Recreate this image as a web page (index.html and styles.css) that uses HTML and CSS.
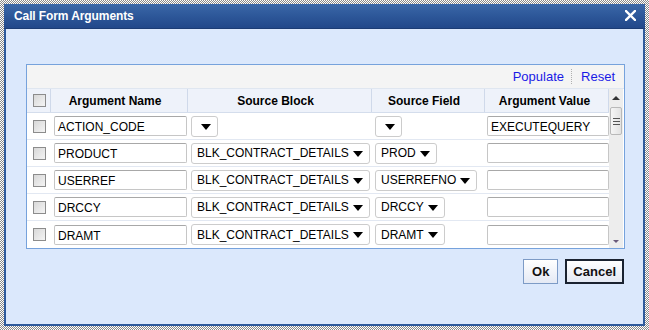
FILE: index.html
```html
<!DOCTYPE html>
<html>
<head>
<meta charset="utf-8">
<link rel="stylesheet" href="styles.css">
</head>
<body>
<div class="dialog">
  <div class="titlebar">
    <span class="title">Call Form Arguments</span>
    <svg class="close" width="11" height="11" viewBox="0 0 11 11"><path d="M1 1L10 10M10 1L1 10" stroke="#fff" stroke-width="2.4" stroke-linecap="square"/></svg>
  </div>
  <div class="content">
    <div class="grid">
      <div class="toolbar">
        <a class="link">Populate</a>
        <span class="sep"></span>
        <a class="link">Reset</a>
      </div>
      <div class="tablewrap">
        <div class="table">
          <div class="row head">
            <div class="cell cb"><span class="check"></span></div>
            <div class="cell">Argument Name</div>
            <div class="cell">Source Block</div>
            <div class="cell">Source Field</div>
            <div class="cell last">Argument Value</div>
          </div>
          <div class="row">
            <div class="cell cb"><span class="check"></span></div>
            <div class="cell"><span class="input name">ACTION_CODE</span></div>
            <div class="cell"><span class="select"><span class="arrow"></span></span></div>
            <div class="cell"><span class="select"><span class="arrow"></span></span></div>
            <div class="cell"><span class="input value">EXECUTEQUERY</span></div>
          </div>
          <div class="row">
            <div class="cell cb"><span class="check"></span></div>
            <div class="cell"><span class="input name">PRODUCT</span></div>
            <div class="cell"><span class="select">BLK_CONTRACT_DETAILS<span class="arrow"></span></span></div>
            <div class="cell"><span class="select">PROD<span class="arrow"></span></span></div>
            <div class="cell"><span class="input value"></span></div>
          </div>
          <div class="row">
            <div class="cell cb"><span class="check"></span></div>
            <div class="cell"><span class="input name">USERREF</span></div>
            <div class="cell"><span class="select">BLK_CONTRACT_DETAILS<span class="arrow"></span></span></div>
            <div class="cell"><span class="select">USERREFNO<span class="arrow"></span></span></div>
            <div class="cell"><span class="input value"></span></div>
          </div>
          <div class="row">
            <div class="cell cb"><span class="check"></span></div>
            <div class="cell"><span class="input name">DRCCY</span></div>
            <div class="cell"><span class="select">BLK_CONTRACT_DETAILS<span class="arrow"></span></span></div>
            <div class="cell"><span class="select">DRCCY<span class="arrow"></span></span></div>
            <div class="cell"><span class="input value"></span></div>
          </div>
          <div class="row">
            <div class="cell cb"><span class="check"></span></div>
            <div class="cell"><span class="input name">DRAMT</span></div>
            <div class="cell"><span class="select">BLK_CONTRACT_DETAILS<span class="arrow"></span></span></div>
            <div class="cell"><span class="select">DRAMT<span class="arrow"></span></span></div>
            <div class="cell"><span class="input value"></span></div>
          </div>
        </div>
        <div class="scrollbar">
          <span class="up"></span>
          <span class="thumb"><i></i><i></i><i></i></span>
          <span class="fill"></span>
          <span class="down"></span>
        </div>
      </div>
    </div>
    <div class="buttons">
      <button class="btn">Ok</button>
      <button class="btn cancel">Cancel</button>
    </div>
  </div>
</div>
</body>
</html>
```
FILE: styles.css
```css
html, body {
  margin: 0;
  padding: 0;
}
body {
  width: 649px;
  height: 330px;
  padding: 4px;
  box-sizing: border-box;
  background: repeating-conic-gradient(#8a8a8a 0 25%, #ffffff 0 50%) 0 0 / 2px 2px;
  font-family: "Liberation Sans", Arial, sans-serif;
  font-size: 12px;
  color: #000;
}
.dialog {
  width: 641px;
  height: 322px;
  box-sizing: border-box;
  border: 2px solid #2e5a9c;
  border-top: 0;
  display: flex;
  flex-direction: column;
  background: #dbe8fc;
}
.titlebar {
  height: 25px;
  margin: 0 -2px;
  padding: 0 9px 0 10px;
  display: flex;
  align-items: center;
  justify-content: space-between;
  background: linear-gradient(#3b68a8, #2d5799 50%, #22488a);
  border-bottom: 1px solid #1c3c74;
  box-sizing: border-box;
}
.title {
  color: #fff;
  font-weight: bold;
  font-size: 12px;
  letter-spacing: -0.1px;
}
.close {
  display: block;
  margin-top: -1px;
}
.content {
  padding: 35px 16px 0 20px;
  display: flex;
  flex-direction: column;
}
.grid {
  width: 597px;
  border: 1px solid #76a2dc;
  background: #fff;
}
.toolbar {
  height: 23px;
  background: #f4f4f4;
  border-bottom: 1px solid #dfe6f0;
  display: flex;
  align-items: center;
  justify-content: flex-end;
  padding-right: 9px;
}
.link {
  color: #1a1ae6;
  font-size: 13px;
}
.sep {
  width: 0;
  height: 15px;
  border-left: 1px dotted #b0b0b0;
  margin: 0 9px 0 7px;
}
.tablewrap {
  display: flex;
  height: 159px;
}
.table {
  width: 582px;
  overflow: hidden;
}
.row {
  display: grid;
  grid-template-columns: 24px 137px 184px 113px 124px;
  height: 27px;
  border-bottom: 1px solid #e2e8f2;
  box-sizing: border-box;
}
.row:last-child {
  border-bottom: 0;
}
.row.head {
  height: 24px;
  background: #eef2fa;
  border-bottom: 1px solid #d4ddec;
  font-weight: bold;
}
.head .cell {
  justify-content: center;
  border-right: 1px solid #cfd9ea;
  padding-right: 10px;
}
.head .cell.last {
  padding-right: 6px;
}
.head .cell.cb {
  justify-content: flex-start;
  padding-right: 0;
}
.cell {
  display: flex;
  align-items: center;
  padding-left: 2px;
  white-space: nowrap;
}
.cell.cb {
  padding-left: 6px;
}
.check {
  width: 11px;
  height: 11px;
  border: 1px solid #8c8c8c;
  background: linear-gradient(135deg, #d8d8d8, #f4f4f4);
}
.input {
  display: block;
  height: 20px;
  box-sizing: border-box;
  border: 1px solid #c6c6c6;
  border-top-color: #a8a8a8;
  border-radius: 2px;
  padding: 3px 0 0 3px;
  line-height: 14px;
  background: #fff;
}
.input.name {
  width: 133px;
  margin-left: 1px;
}
.input.value {
  width: 126px;
}
.select {
  display: inline-flex;
  align-items: center;
  height: 21px;
  box-sizing: border-box;
  border: 1px solid #cccccc;
  border-radius: 3px;
  padding: 0 6px 0 5px;
  background: #fff;
  margin-left: 1px;
}
.arrow {
  width: 0;
  height: 0;
  border-left: 5px solid transparent;
  border-right: 5px solid transparent;
  border-top: 6px solid #000;
  margin-left: 10px;
  margin-top: 1px;
}
.select .arrow:only-child {
  margin-left: 4px;
}
.scrollbar {
  width: 14px;
  background: #ededed;
  display: flex;
  flex-direction: column;
  align-items: center;
}
.up {
  margin-top: 7px;
  width: 0;
  height: 0;
  border-left: 4px solid transparent;
  border-right: 4px solid transparent;
  border-bottom: 4px solid #333;
}
.thumb {
  margin-top: 7px;
  width: 12px;
  height: 28px;
  box-sizing: border-box;
  border: 1px solid #b9b9b9;
  border-radius: 2px;
  background: linear-gradient(90deg, #f6f6f6, #e2e2e2);
  display: flex;
  flex-direction: column;
  justify-content: center;
  align-items: center;
  gap: 2px;
}
.thumb i {
  width: 7px;
  height: 1px;
  background: #555;
}
.fill {
  flex: 1;
}
.down {
  margin-bottom: 5px;
  width: 0;
  height: 0;
  border-left: 3px solid transparent;
  border-right: 3px solid transparent;
  border-top: 3px solid #6a5a7a;
}
.buttons {
  display: flex;
  justify-content: flex-end;
  gap: 7px;
  margin-top: 10px;
  width: 598px;
}
.btn {
  height: 25px;
  font-family: "Liberation Sans", Arial, sans-serif;
  font-weight: bold;
  font-size: 13px;
  color: #111;
  background: linear-gradient(#ffffff, #e4e9f4);
  border: 1px solid #7d9bc6;
  padding: 0 8px;
  margin: 0;
}
.btn.cancel {
  border: 2px solid #1a2230;
  padding: 0 6px;
}
```
